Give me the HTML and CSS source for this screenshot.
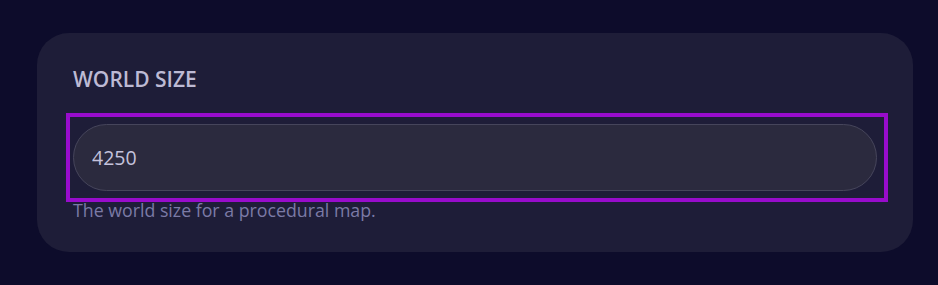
FILE: index.html
```html
<!DOCTYPE html>
<html lang="en">
<head>
<meta charset="utf-8">
<title>World Size</title>
<link rel="stylesheet" href="styles.css">
</head>
<body>
  <main class="page">
    <section class="card">
      <label class="label" for="world-size">WORLD SIZE</label>
      <div class="field">
        <input id="world-size" class="input" type="text" value="4250">
      </div>
      <p class="help">The world size for a procedural map.</p>
    </section>
  </main>
</body>
</html>
```

FILE: styles.css
```css
html, body {
  margin: 0;
  padding: 0;
  background: #0d0c2b;
}

body {
  font-family: "Open Sans", "Noto Sans", sans-serif;
}

.page {
  padding: 33px 25px 33px 37px;
}

.card {
  background: #1e1d38;
  border-radius: 32px;
  padding: 32px 36px 31px 36px;
  display: flex;
  flex-direction: column;
}

.label {
  display: block;
  font-size: 21px;
  line-height: 28px;
  font-weight: 600;
  color: #bdbad4;
  letter-spacing: 0;
}

.field {
  position: relative;
  margin-top: 31px;
}

.field::after {
  content: "";
  position: absolute;
  top: -11px;
  bottom: -11px;
  left: -7px;
  right: -11px;
  border: 4px solid #980ccc;
  pointer-events: none;
}

.input {
  display: block;
  box-sizing: border-box;
  width: 100%;
  height: 67px;
  margin: 0;
  padding: 0 18px;
  background: #2b2a3e;
  border: 1px solid #46455b;
  border-radius: 34px;
  font-family: "Open Sans", "Noto Sans", sans-serif;
  font-size: 19.5px;
  color: #c4c2dc;
  outline: none;
}

.help {
  margin: 8px 0 0 0;
  font-size: 17.75px;
  line-height: 22px;
  color: #7b7aa6;
}
```
